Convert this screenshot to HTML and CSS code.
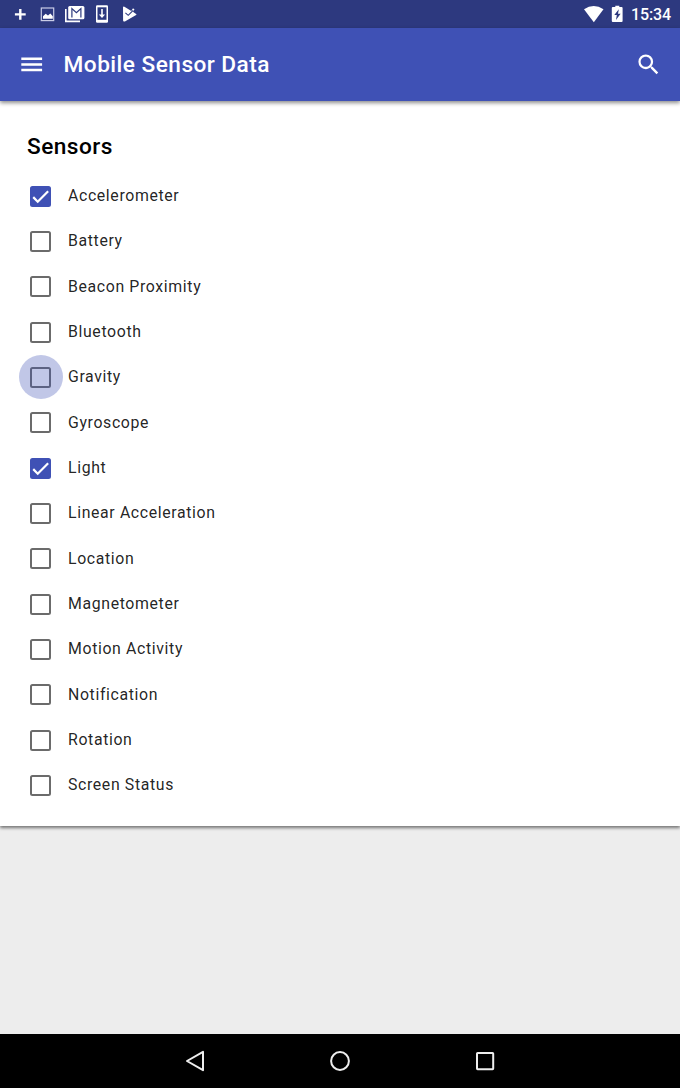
FILE: index.html
```html
<!DOCTYPE html>
<html lang="en">
<head>
<meta charset="utf-8">
<title>Mobile Sensor Data</title>
<link rel="stylesheet" href="styles.css">
</head>
<body>
<div class="screen">
  <div class="status">
    <svg class="status-left" width="150" height="28" viewBox="0 0 150 28">
      <path d="M20.3 9v10.8M14.9 14.4h10.8" fill="none" stroke="#fff" stroke-width="2.4"/>
      <rect x="41.3" y="8" width="12.4" height="12.6" fill="none" stroke="#c9cce6" stroke-width="1.2"/>
      <path d="M43 18.7v-2.5l2.7-2.4 2.3 1.8 2.3-2 2.5 2.7v2.4z" fill="#fff"/>
      <path d="M65.8 9v12.4H80" fill="none" stroke="#fff" stroke-width="1.6"/>
      <rect x="68.2" y="5.9" width="16.2" height="13.4" rx="1.5" fill="#fff"/>
      <path d="M71.9 17.6V8.6l4.5 4.2 4.5-4.2v9" fill="none" stroke="#2d397f" stroke-width="1.2"/>
      <rect x="96" y="5.2" width="12" height="17.6" rx="1.2" fill="#fff"/>
      <path d="M97.5 7.3h9v12.5h-9z" fill="#2d397f"/>
      <path d="M102 9v7" stroke="#fff" stroke-width="1.6"/>
      <path d="M98.9 14.4h6.2L102 18z" fill="#fff"/>
      <path d="M123 7.3q.2-1.2 1.4-.6l4.1 2.6 2.8 1.6 1.7-2.6 1.5 1.2-1.6 2.3 3.2 2.1q.9.6 0 1.2l-11.2 6.3q-1.8.7-1.8-.9z" fill="#fff"/>
      <path d="M125.4 12.9l2.8 2.4 5-5" fill="none" stroke="#2d397f" stroke-width="1.1"/>
    </svg>
    <div class="status-right">
      <svg width="56" height="28" viewBox="0 0 56 28">
        <path d="M4 9.2Q13.8 2.8 23.5 9.2L13.8 22.2z" fill="#fff"/>
        <path d="M35.3 5.7h4v1.4h2.3q1 0 1 1v13q0 1-1 1h-8.8q-1 0-1-1v-13q0-1 1-1h2.5z" fill="#fff"/>
        <path d="M38.8 9.2l-4.5 5.9h2.5L36 20l4.6-6.2h-2.6z" fill="#2d397f"/>
      </svg>
      <span class="clock">15:34</span>
    </div>
  </div>
  <header class="appbar">
    <svg class="menu" width="22" height="16" viewBox="0 0 22 16"><path d="M.3 2.7h20.8M.3 8.4h20.8M.3 14.1h20.8" stroke="#fff" stroke-width="2.5"/></svg>
    <h1 class="title">Mobile Sensor Data</h1>
    <svg class="search" width="27.2" height="27.2" viewBox="0 0 24 24"><path fill="#fff" d="M15.5 14h-.79l-.28-.27A6.471 6.471 0 0 0 16 9.5 6.5 6.5 0 1 0 9.5 16c1.61 0 3.09-.59 4.23-1.57l.27.28v.79l5 4.99L20.49 19l-4.99-5zm-6 0C7.01 14 5 11.99 5 9.5S7.01 5 9.5 5 14 7.01 14 9.5 11.99 14 9.5 14z"/></svg>
  </header>
  <main class="content">
    <section class="card">
      <h2 class="heading">Sensors</h2>
      <ul class="list">
        <li class="row"><span class="box checked"><svg class="tick" viewBox="0 0 24 24"><path d="M1.73 12.91l6.37 6.37L22.79 4.59"/></svg></span>Accelerometer</li>
        <li class="row"><span class="box"></span>Battery</li>
        <li class="row"><span class="box"></span>Beacon Proximity</li>
        <li class="row"><span class="box"></span>Bluetooth</li>
        <li class="row"><span class="box ripple"></span>Gravity</li>
        <li class="row"><span class="box"></span>Gyroscope</li>
        <li class="row"><span class="box checked"><svg class="tick" viewBox="0 0 24 24"><path d="M1.73 12.91l6.37 6.37L22.79 4.59"/></svg></span>Light</li>
        <li class="row"><span class="box"></span>Linear Acceleration</li>
        <li class="row"><span class="box"></span>Location</li>
        <li class="row"><span class="box"></span>Magnetometer</li>
        <li class="row"><span class="box"></span>Motion Activity</li>
        <li class="row"><span class="box"></span>Notification</li>
        <li class="row"><span class="box"></span>Rotation</li>
        <li class="row"><span class="box"></span>Screen Status</li>
      </ul>
    </section>
  </main>
  <nav class="navbar">
    <svg width="22" height="24" viewBox="0 0 22 24"><path d="M19 2.8v18.4L3 12z" fill="none" stroke="#eee" stroke-width="2" stroke-linejoin="round"/></svg>
    <svg width="22" height="24" viewBox="0 0 22 24"><circle cx="11" cy="12" r="8.9" fill="none" stroke="#eee" stroke-width="2"/></svg>
    <svg width="22" height="24" viewBox="0 0 22 24"><rect x="3" y="4" width="16.2" height="16.2" rx=".6" fill="none" stroke="#eee" stroke-width="2"/></svg>
  </nav>
</div>
</body>
</html>
```
FILE: styles.css
```css
* { box-sizing: border-box; }
body { margin: 0; font-family: Roboto, sans-serif; }
svg { display: block; flex: none; }
.screen { width: 680px; height: 1088px; display: flex; flex-direction: column; background: #ededed; overflow: hidden; }
.status { height: 28px; flex: none; display: flex; justify-content: space-between; background: #2d397f; color: #fff; }
.status-right { display: flex; width: 100px; }
.clock { font-size: 16px; font-weight: 500; line-height: 30px; margin-left: -5px; letter-spacing: -.1px; }
.appbar { position: relative; height: 72.6px; flex: none; display: flex; align-items: center; padding: 0 18.2px 0 21px; background: #3f51b5; color: #fff; box-shadow: 0 2px 4px rgba(0,0,0,.45); }
.title { margin: 0 auto 0 20.6px; padding-top: 2px; font-size: 22.67px; font-weight: 500; letter-spacing: .46px; line-height: 36px; }
.content { flex: 1; min-height: 0; }
.card { height: 725.7px; background: #fff; padding: 28.4px 27px 0; box-shadow: 0 2px 3px rgba(0,0,0,.5); }
.heading { margin: 0; height: 44.3px; font-size: 22.67px; line-height: 36px; font-weight: 500; letter-spacing: .46px; color: #000; }
.list { margin: 0; padding: 0; list-style: none; }
.row { height: 45.33px; display: flex; align-items: center; gap: 16.8px; padding-left: 3.2px; font-size: 15.87px; letter-spacing: .63px; color: rgba(0,0,0,.87); line-height: 22px; }
.box { position: relative; flex: none; width: 21px; height: 21px; margin-top: .4px; border: 2px solid #6b6b6b; border-radius: 2.5px; }
.checked { border-color: #3f51b5; background: #3f51b5; }
.tick { width: 17px; height: 17px; fill: none; stroke: #fff; stroke-width: 3.12; }
.ripple::before { content: ""; position: absolute; left: -13.5px; top: -13.5px; width: 44px; height: 44px; border-radius: 50%; background: rgba(63,81,181,.32); }
.navbar { height: 54.4px; flex: none; display: flex; justify-content: center; align-items: center; gap: 123px; background: #000; }
```
